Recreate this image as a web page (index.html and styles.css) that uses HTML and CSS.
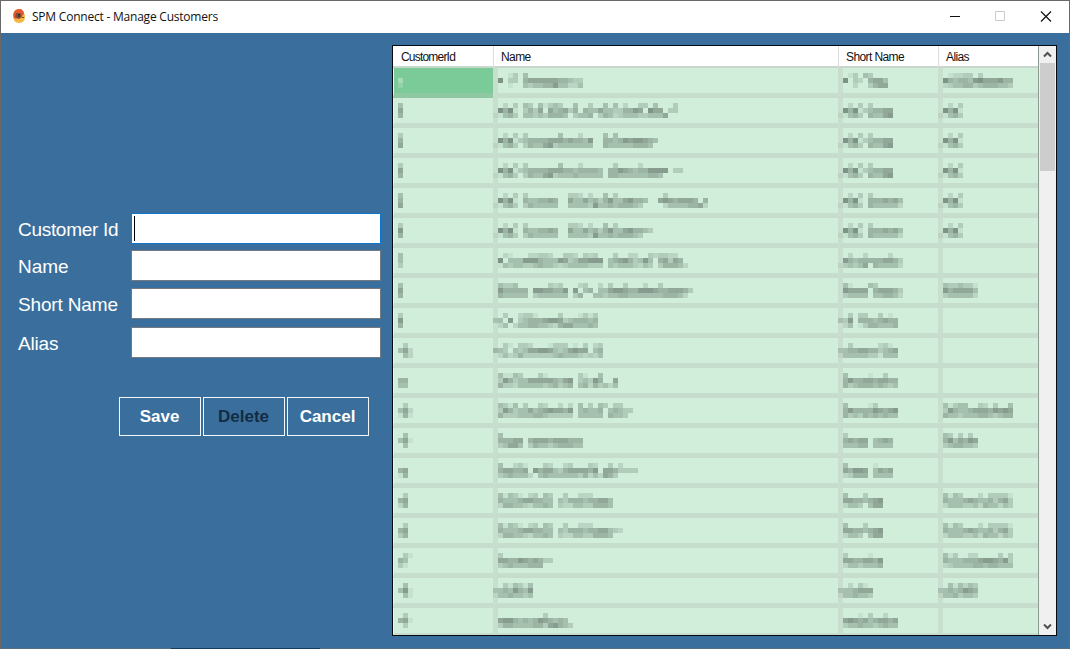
FILE: index.html
```html
<!DOCTYPE html>
<html lang="en">
<head>
<meta charset="utf-8">
<title>SPM Connect - Manage Customers</title>
<link rel="stylesheet" href="styles.css">
</head>
<body>
<div class="window">
  <header class="titlebar">
    <svg class="logo" width="14" height="16" viewBox="0 0 14 16"><path d="M7 1C3 1 1 4 1 8s2 7 6 7 6-3 6-6-2-8-6-8z" fill="#f5b648"/><path d="M2 10C0 5 3 1 7 1c3 0 5 2 5 5l-3 3-5 2z" fill="#e35932"/><path d="M4 5l5 0 1 4-3 2-4-2z" fill="#8a4a2d"/><path d="M6 6h2v3H6z" fill="#353c3c"/><path d="M10 9h2v1h-2z" fill="#684b27"/></svg>
    <h1 class="title">SPM Connect - Manage Customers</h1>
    <svg class="controls" width="102" height="32" viewBox="0 0 102 32" fill="none"><path d="M0 15.500h10" stroke="#111"/><path d="M45.500 10.500h9v9h-9z" stroke="#ccc"/><path d="M91 10.500l10 10M101 10.500l-10 10" stroke="#111" stroke-width="1.2"/></svg>
  </header>
  <main class="content">
    <form class="editor">
      <div class="fields">
        <label class="label cid">Customer Id</label><div class="input focused"><span class="caret"></span></div>
        <label class="label">Name</label><div class="input"></div>
        <label class="label short">Short Name</label><div class="input"></div>
        <label class="label alias">Alias</label><div class="input"></div>
      </div>
      <div class="buttons">
        <button class="btn save" type="button">Save</button>
        <button class="btn delete" type="button" disabled>Delete</button>
        <button class="btn cancel" type="button">Cancel</button>
      </div>
    </form>
    <section class="table">
      <div class="grid">
        <div class="row head"><span class="th id">CustomerId</span><span class="th">Name</span><span class="th">Short Name</span><span class="th">Alias</span></div>
        <div class="rows" id="rows"></div>
      </div>
      <div class="scroll">
        <svg class="arrow" width="17" height="17" viewBox="0 0 17 17"><path d="M5 10.500l3.500-3.500 3.500 3.500" fill="none" stroke="#505050" stroke-width="2"/></svg>
        <div class="thumb"></div>
        <svg class="arrow down" width="17" height="17" viewBox="0 0 17 17"><path d="M5 6.500l3.500 3.500 3.500-3.500" fill="none" stroke="#505050" stroke-width="2"/></svg>
      </div>
    </section>
  </main>
  <footer class="edge"><span class="edge-dark"></span></footer>
</div>
<script src="rows.js"></script>
</body>
</html>
```
FILE: rows.js
```js
// Redacted cells: three lines of tone levels per cell, one digit per 5px block.
const ABC = ['00203', '08581', '11453'];
const two = (a, b) => a.map((s, i) => s + b[i]);
const GROUP = ['0300000', '3455556', '0354467'];
const SHORT_GROUP = two(ABC, ['030000', '345566', '054467']);
const SYSTEM = two(ABC, ['03000000', '05445565', '03544444']);
const TESTING = ['003320200403000000', '006446453574467554', '004444374454555430'];
const TECH = ['041431023043003002220000', '054445665544043555455664', '025544324454032244335554'];
const FLEX_SHORT = ['040003000', '066554567', '024430466'];
const FLEX_ALIAS = ['041430002033331', '054445654453563', '024443342544243'];
const ids = [
  ['00','04','02'],['04','06','05'],['03','05','06'],['03','06','05'],['04','05','06'],['03','07','05'],['04','04','03'],['04','06','05'],['03','07','05'],
  ['0030','0462','0042'],['000','055','044'],['0030','0462','0151'],['0040','0461','0040'],['000','056','015'],['003','056','025'],['003','056','035'],['0031','0540','0310'],['0040','0471','0041'],['0030','0561','0030']
];
const names = [
  ['000130400000000000','080330566666655433','000100434455744224'],
  two(ABC, ['04304134300400300404020033040003','03536064563505446443355760866033','04434355540344503542344433444600']),
  two(two(ABC, GROUP), ['040002000040400000000','665655470055457677654','344444440054444455540']),
  two(two(ABC, GROUP), ['04000200000030000200000000','66554555540557654557777033','34445444440554444445540000']),
  two(two(SYSTEM, TESTING), ['000300000000','006765666505','000244445562']),
  two(two(SYSTEM, TESTING), ['0','3','0']),
  ['002100022332003320323000300220032332200','080444777544476346677704567534740563650','014344334544323444433304344432430355542'],
  ['0433400000032300023002030030002003000000','0755555077665570704504467765577765566653','0544444034444440350044344554444444555420'],
  ['003002331000030001313','340703455567763455545','024024455443256644454'],
  ['0031033200013330103023','4430434667764346766045','0242353333334544432324'],
  ['0411430003100000031004000','0375344666665467034375006','0533244444345345045253424'],
  ['0431403003200202040304303300','0375344645676657045445045433','0533344455433333044444054430'],
  ['040000000000000000','055566056665666555','034664035443455544'],
  ['04002310003200230003200302000','05665560756643566665706653333','03454442045444444352426530000'],
  TECH, two(TECH, ['00','32','00']),
  ['030000000000','066557656533','034544455500'],
  ['00314314','34547547','14454434'],
  ['0000000000300000','0677545457654540','0355444455367543']
];
const shortNames = [
  ['0013043000','0803205664','0002003566'], SHORT_GROUP, SHORT_GROUP, SHORT_GROUP,
  two(ABC,['03000000','05556564','05444442']), two(ABC,['03000000','05556564','05444442']),
  ['0020020000200','0754555556653','1343460544442'],['0410004300000','0766660566653','0344440445542'],['003033003010','337055545655','024013554445'],['003000002310','345566553456','144444331444'],['040000100300','057556656655','053455545434'],['040000130000','057555576567','053435454544'],
  ['03000000000','05656604565','04445504444'],['04000001000','06577604656','02355504444'],FLEX_SHORT,FLEX_SHORT,['030000100','066556657','024434445'],['0020310','3445666','1445443'],['000010300200','067656456656','034454434544']
];
const aliases = [
  ['001223303000000','085455478666755','023445534555443'],ABC,ABC,ABC,ABC,ABC,null,['04334331','07566664','03444442'],null,null,null,['041344003203004','037544566657676','054434445543455'],['04303030','05746576','03455443'],null,FLEX_ALIAS,FLEX_ALIAS,['041300220000303','054445556776573','023444455455444'],['00414243','34545765','14453443'],null
];
function mosaic(levels) {
  if (!levels) return '';
  let rects = '';
  levels.forEach((line, y) => [...line].forEach((v, x) => {
    if (v !== '0') rects += `<rect x="${x * 5}" y="${y * 5}" width="5" height="5" opacity="${(+v * 0.078).toFixed(2)}"/>`;
  }));
  return `<svg class="mosaic" width="${Math.max(...levels.map(l => l.length)) * 5}" height="15" shape-rendering="crispEdges">${rects}</svg>`;
}
document.getElementById('rows').innerHTML = names.map((name, i) =>
  `<div class="row">${[ids[i], name, shortNames[i], aliases[i]].map((v, c) => `<div class="cell${c ? '' : ' id'}${!c && !i ? ' selected' : ''}">${mosaic(v)}</div>`).join('')}</div>`).join('');
```
FILE: styles.css
```css
* { box-sizing: border-box; }
body { margin: 0; font-family: "Liberation Sans", Arial, sans-serif; overflow: hidden; }
.window { width: 1070px; height: 649px; display: flex; flex-direction: column; background: #3a6f9d; border: solid #696969; border-width: 1px 1px 0; }
.titlebar { height: 32px; flex: none; background: #fff; display: flex; align-items: center; padding: 0 18px 0 11px; }
.logo { margin-right: 6px; margin-bottom: 2px; }
.title { margin: 0 0 1px; font: 12px "Open Sans", "Noto Sans", sans-serif; letter-spacing: -.22px; color: #111; flex: 1; }
.controls { flex: none; margin-right: -1px; }
.content { flex: 1; min-height: 0; display: flex; padding: 12px 12px 12px 17px; }
.editor { width: 374px; flex: none; padding-top: 168px; }
.fields { display: grid; grid-template-columns: 113px 250px; grid-template-rows: 37px 38px 39px 31px; }
.label { color: #fff; font-size: 19px; line-height: 33px; white-space: nowrap; }
.cid { letter-spacing: -.3px; }
.short { letter-spacing: -.15px; }
.alias { letter-spacing: -.2px; }
.input { height: 31px; background: #fff; border: 1px solid #747980; }
.input.focused { border-color: #0c78cd; padding: 2px 0 0 2px; }
.caret { display: block; width: 1px; height: 25px; background: #000; }
.buttons { display: flex; gap: 2px; padding: 39px 0 0 101px; }
.btn { width: 82px; height: 39px; padding: 0 1px 0 0; background: none; border: 1px solid #f4f8fc; color: #fff; font: bold 17px "Liberation Sans", Arial, sans-serif; }
.btn.delete { color: #142c43; }
.table { width: 665px; height: 591px; flex: none; display: flex; border: 1px solid #050a10; background: #fff; }
.grid { width: 646px; flex: none; overflow: hidden; border-right: 1px solid #8d9992; }
.row { display: grid; grid-template-columns: 100px 345px 100px 100px; height: 30px; }
.head { height: 22px; border-bottom: 2px solid #c7d7cc; background: #fff; }
.th { border-left: 1px solid #ddd; padding: 0 0 0 7px; line-height: 22px; font-size: 12px; letter-spacing: -.6px; color: #111; }
.th.id { border-color: transparent; letter-spacing: -.8px; }
.cell { background: #d0eeda; border-left: 5px solid #c8decf; border-bottom: 5px solid #c6ddce; padding-top: 5px; height: 30px; }
.cell.id { border-left: 1px solid #edf5ef; }
.cell.selected { background: #7bcb99; border-bottom-color: #8fc9a4; }
.mosaic { display: block; margin-left: -5px; fill: #4a5a51; }
.cell.id .mosaic { margin-left: -1px; }
.selected .mosaic { fill: #fff; }
.scroll { width: 17px; display: flex; flex-direction: column; background: #f0f0f0; }
.arrow { flex: none; display: block; }
.thumb { height: 108px; margin: 0 1px; background: #cdcdcd; }
.down { margin-top: auto; }
.edge { height: 1px; background: #566f83; padding-left: 170px; }
.edge-dark { display: block; width: 149px; height: 1px; background: #133e60; }
```
